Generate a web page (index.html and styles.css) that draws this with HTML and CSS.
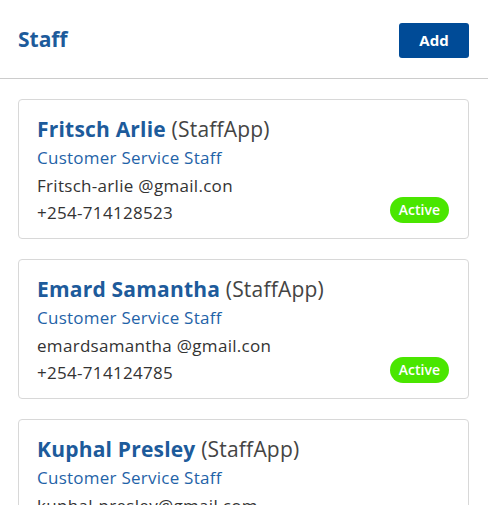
FILE: index.html
```html
<!DOCTYPE html>
<html lang="en">

<head>
    <meta charset="UTF-8">
    <meta name="viewport" content="width=device-width, initial-scale=1.0">
    <title>Staff</title>
    <link rel="stylesheet" href="styles.css">
</head>

<body>
    <div class="header">
        <h1>Staff</h1>
        <button class="add-btn">Add</button>
    </div>

    <div class="list">
        <div class="card">
            <div class="name"><b>Fritsch Arlie</b> (StaffApp)</div>
            <div class="role">Customer Service Staff</div>
            <div class="info">Fritsch-arlie @gmail.con</div>
            <div class="row">
                <div class="info">+254-714128523</div>
                <span class="badge">Active</span>
            </div>
        </div>
        <div class="card">
            <div class="name"><b>Emard Samantha</b> (StaffApp)</div>
            <div class="role">Customer Service Staff</div>
            <div class="info">emardsamantha @gmail.con</div>
            <div class="row">
                <div class="info">+254-714124785</div>
                <span class="badge">Active</span>
            </div>
        </div>
        <div class="card">
            <div class="name"><b>Kuphal Presley</b> (StaffApp)</div>
            <div class="role">Customer Service Staff</div>
            <div class="info">kuphal-presley@gmail.com</div>
        </div>
    </div>
</body>

</html>
```

FILE: styles.css
```css
body {
    margin: 0;
    font-family: "Open Sans", Roboto, sans-serif;
    color: #333;
    background: #fff;
}

.header {
    display: flex;
    align-items: center;
    justify-content: space-between;
    height: 78px;
    padding: 0 19px 0 18px;
    border-bottom: 1px solid #cccccc;
}

.header h1 {
    margin: 0;
    font-size: 21px;
    font-weight: 700;
    color: #1d5b9b;
}

.add-btn {
    width: 70px;
    height: 35px;
    border: none;
    border-radius: 3px;
    background: #004b97;
    color: #fff;
    font-family: inherit;
    font-size: 15px;
    font-weight: 700;
    margin-top: 2px;
}

/* scroll area ends above the bottom of the window */
.list {
    height: 426px;
    box-sizing: border-box;
    overflow: hidden;
    padding: 20px 19px 0 18px;
    display: flex;
    flex-direction: column;
    gap: 20px;
}

.card {
    flex: 0 0 140px;
    box-sizing: border-box;
    border: 1px solid #d8d8d8;
    border-radius: 4px;
    padding: 14px 18px 0 18px;
}

.name {
    font-size: 21px;
    letter-spacing: 0.2px;
    line-height: 30px;
    color: #444;
}

.name b {
    color: #1d5b9b;
}

.role {
    font-size: 17px;
    letter-spacing: 0.25px;
    line-height: 28px;
    color: #1f63a8;
}

.info {
    font-size: 17px;
    letter-spacing: 0.3px;
    line-height: 27px;
    color: #333;
}

.row {
    display: flex;
    justify-content: space-between;
    align-items: center;
}

.badge {
    background: #4ae600;
    color: #fff;
    font-size: 14px;
    font-weight: 600;
    padding: 0 9px;
    height: 26px;
    line-height: 26px;
    border-radius: 13px;
    margin-top: -6px;
    margin-right: 1px;
}
```
